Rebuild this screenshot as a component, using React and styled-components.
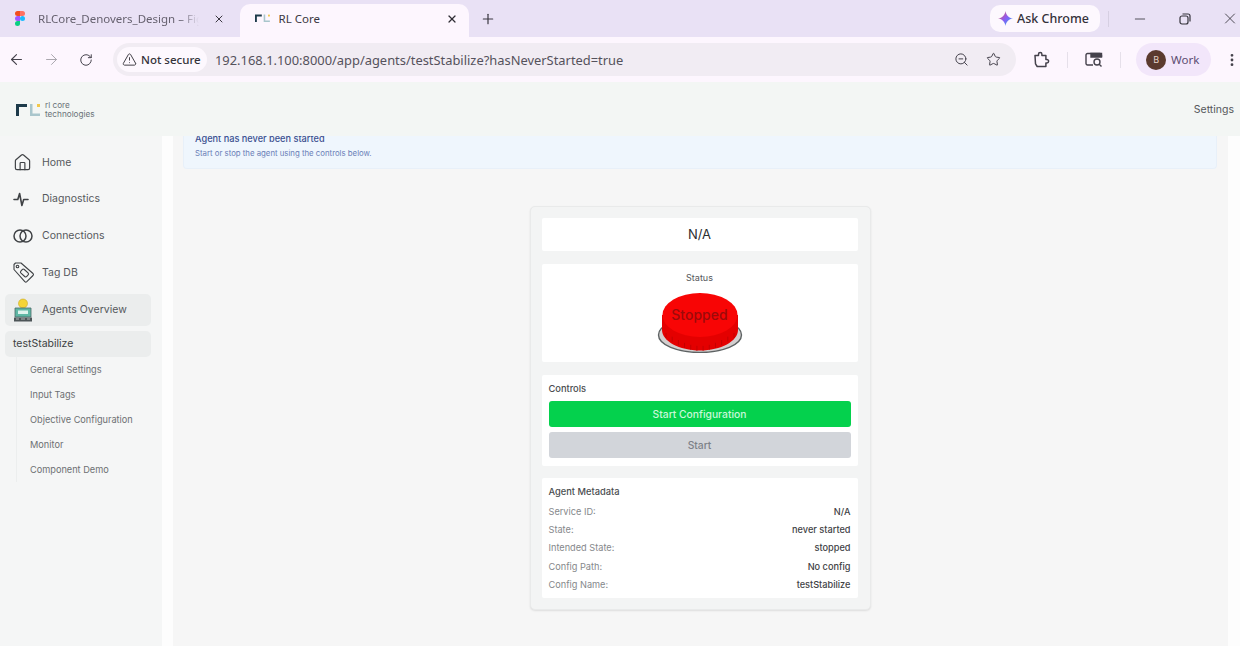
import styled, { createGlobalStyle } from "styled-components";
import {
  ArrowLeft,
  ArrowRight,
  RotateCw,
  TriangleAlert,
  ZoomOut,
  Star,
  Minus,
  X,
  Plus,
  EllipsisVertical,
  Home,
} from "lucide-react";

const GlobalStyle = createGlobalStyle`
  html, body {
    margin: 0;
    padding: 0;
    height: 100%;
    overflow: hidden;
    background: #f6f6f6;
    font-family: Inter, "Liberation Sans", sans-serif;
  }
  * { box-sizing: border-box; }
`;

const Page = styled.div`
  width: 1240px;
  height: 646px;
  display: flex;
  flex-direction: column;
  overflow: hidden;
`;

const TabStrip = styled.div`
  height: 37px;
  flex: none;
  background: #e9e1f5;
  display: flex;
  align-items: flex-end;
  font-family: "Noto Sans", sans-serif;
`;

const Tab = styled.div`
  width: ${(p) => p.$width}px;
  height: 33px;
  display: flex;
  align-items: center;
  padding: 0 ${(p) => p.$padRight}px 4px 15px;
  border-radius: 10px 10px 0 0;
  background: ${(p) => (p.$active ? "#fdf6fe" : "transparent")};
  font-size: 11.5px;
  color: ${(p) => (p.$active ? "#3b3842" : "#66616f")};
  flex: none;
`;

const TabTitle = styled.span`
  margin-left: ${(p) => p.$gap}px;
  flex: 1;
  white-space: nowrap;
  overflow: hidden;
  mask-image: ${(p) => (p.$fade ? "linear-gradient(90deg, #000 88%, transparent)" : "none")};
`;

const NewTab = styled.div`
  width: 18px;
  margin: 0 0 10px 11px;
  display: flex;
  color: #3a3740;
`;

const TabActions = styled.div`
  margin-left: auto;
  height: 37px;
  display: flex;
  align-items: center;
  color: #2f2d35;
  padding-right: 1px;
`;

const AskChrome = styled.div`
  width: 110px;
  height: 27px;
  background: #fdf8fe;
  border-radius: 10px;
  display: flex;
  align-items: center;
  gap: 4px;
  padding-left: 8px;
  font-size: 12.5px;
  font-weight: 500;
  color: #33313a;
  white-space: nowrap;
`;

const WindowDivider = styled.div`
  width: 1px;
  height: 16px;
  background: #d6cfe2;
  margin: 0 22px 0 8px;
`;

const WindowButton = styled.div`
  width: 18px;
  display: flex;
  justify-content: center;
  margin-right: ${(p) => p.$gap}px;
`;

const Toolbar = styled.div`
  height: 45px;
  flex: none;
  background: #fdf6fe;
  display: flex;
  align-items: center;
  padding-left: 8px;
  color: #45424c;
  font-family: "Noto Sans", sans-serif;
`;

const NavButton = styled.div`
  width: 17px;
  display: flex;
  justify-content: center;
  margin-right: ${(p) => p.$gap}px;
  color: ${(p) => p.$color || "#45424c"};
`;

const Omnibox = styled.div`
  width: 904px;
  height: 33px;
  margin-left: 18px;
  background: #f1ecf3;
  border-radius: 17px;
  display: flex;
  align-items: center;
  padding: 0 15px 0 4px;
`;

const SecurityChip = styled.div`
  width: 90px;
  height: 25px;
  background: #fdf8fe;
  border-radius: 13px;
  display: flex;
  align-items: center;
  gap: 4px;
  padding-left: 5px;
  font-size: 11.5px;
  font-weight: 500;
  color: #35333b;
  white-space: nowrap;
`;

const Url = styled.span`
  margin-left: 8px;
  flex: 1;
  font-size: 12.9px;
  color: #55525c;
  white-space: nowrap;
`;

const OmniIcon = styled.div`
  display: flex;
  margin-left: ${(p) => p.$gap}px;
`;

const ToolbarDivider = styled.div`
  width: 1px;
  height: 16px;
  background: #e6e0ea;
  margin-left: ${(p) => p.$gap}px;
`;

const ProfileChip = styled.div`
  width: 75px;
  height: 33px;
  margin-left: 15px;
  border-radius: 17px;
  background: #f2e6fa;
  display: flex;
  align-items: center;
  gap: 5px;
  padding-left: 10px;
  font-size: 11.5px;
  color: #5c4c72;
`;

const Avatar = styled.div`
  width: 20px;
  height: 20px;
  border-radius: 50%;
  background: #5b3a2e;
  color: #e8d8cc;
  font-size: 9px;
  display: flex;
  align-items: center;
  justify-content: center;
`;

const AppHeader = styled.header`
  height: 54px;
  flex: none;
  background: #f3f6f4;
  display: flex;
  align-items: center;
  justify-content: space-between;
  padding: 1px 6px 0 16px;
  font-size: 10.5px;
  color: #55585b;
`;

const LogoRow = styled.div`
  display: flex;
  align-items: center;
  gap: 4px;
`;

const LogoText = styled.div`
  font-size: 8.2px;
  line-height: 8.5px;
  color: #6a7378;
`;

const Body = styled.div`
  flex: 1;
  display: flex;
  min-height: 0;
`;

const Sidebar = styled.nav`
  width: 162px;
  flex: none;
  background: #f5f6f6;
  padding: 10px 11px 0 5px;
`;

const Gutter = styled.div`
  width: 11px;
  flex: none;
  background: #fdfdfd;
`;

const NavItem = styled.div`
  height: 32px;
  margin-bottom: 4.9px;
  display: flex;
  align-items: center;
  border-radius: 5px;
  background: ${(p) => (p.$active ? "#ebeded" : "transparent")};
  font-size: 10.5px;
  color: #55585c;
`;

const NavIcon = styled.div`
  width: 37px;
  padding-left: 8px;
  flex: none;
  display: flex;
  color: #3f4245;
`;

const AgentName = styled.div`
  height: 26px;
  margin-top: 5px;
  border-radius: 5px;
  background: #ebeded;
  display: flex;
  align-items: center;
  padding-left: 8px;
  font-size: 10.5px;
  color: #3c3f42;
`;

const SubMenu = styled.div`
  margin: -1px 0 0 11px;
  border-left: 1px solid #eceeee;
  padding-left: 13px;
  padding-top: 1px;
`;

const SubItem = styled.div`
  height: 25px;
  display: flex;
  align-items: center;
  font-size: 9.2px;
  color: #6d7073;
  white-space: nowrap;
`;

const Main = styled.main`
  flex: 1;
  background: #f6f6f6;
  padding: 0 11px 0 10px;
  display: flex;
  flex-direction: column;
  align-items: center;
  min-width: 0;
`;

const Notice = styled.div`
  width: 100%;
  height: 33px;
  flex: none;
  background: #eff6fd;
  border: 1px solid #e8f0f9;
  border-top: none;
  border-radius: 0 0 4px 4px;
  padding-left: 11px;
  overflow: hidden;
`;

const NoticeTitle = styled.div`
  font-size: 9.2px;
  font-weight: 500;
  line-height: 12px;
  margin-top: -3px;
  color: #3c4f8e;
`;

const NoticeText = styled.div`
  font-size: 7.8px;
  line-height: 10px;
  margin-top: 3px;
  color: #6b7fb8;
`;

const Card = styled.section`
  width: 341px;
  height: 404px;
  margin-top: 37px;
  background: #f3f4f4;
  border: 1px solid #e9eaea;
  border-radius: 5px;
  box-shadow: 0 1px 2px rgba(0, 0, 0, 0.1);
  padding: 11px 12px 0 11px;
  display: flex;
  flex-direction: column;
  gap: 13px;
`;

const Panel = styled.div`
  background: #fff;
  border-radius: 2px;
  height: ${(p) => p.$height}px;
  flex: none;
`;

const TitlePanel = styled(Panel)`
  display: flex;
  align-items: center;
  justify-content: center;
  padding-bottom: 1px;
  font-size: 13px;
  color: #2b2d30;
`;

const StatusPanel = styled(Panel)`
  display: flex;
  flex-direction: column;
  align-items: center;
  padding-top: 8px;
`;

const StatusLabel = styled.div`
  font-size: 9px;
  line-height: 12px;
  color: #55585b;
`;

const ButtonWrap = styled.div`
  position: relative;
  width: 88px;
  height: 60px;
  margin-top: 9px;
`;

const StoppedText = styled.span`
  position: absolute;
  top: 13px;
  left: 0;
  right: 0;
  text-align: center;
  font-size: 14px;
  font-weight: 500;
  line-height: 17px;
  color: #9c0a0a;
`;

const ControlsPanel = styled(Panel)`
  padding: 8px 7px 0;
`;

const PanelHeading = styled.div`
  font-size: 9.3px;
  font-weight: 500;
  line-height: 12px;
  color: #4a4d50;
`;

const ActionButton = styled.div`
  height: 26px;
  margin-top: ${(p) => p.$top}px;
  border-radius: 3px;
  background: ${(p) => (p.$primary ? "#04d14d" : "#d2d5da")};
  color: ${(p) => (p.$primary ? "#c8f8da" : "#7d8188")};
  display: flex;
  align-items: center;
  justify-content: center;
  font-size: 10.3px;
  font-weight: 500;
`;

const MetaPanel = styled(Panel)`
  margin-top: -1px;
  padding: 8px 7px 0;
`;

const MetaRows = styled.div`
  padding-top: 4px;
`;

const MetaRow = styled.div`
  height: 18.3px;
  display: flex;
  align-items: center;
  justify-content: space-between;
  font-size: 9.2px;
  color: #85888b;
`;

const MetaValue = styled.span`
  font-weight: 500;
  color: #3f4245;
`;

const PageEdge = styled.div`
  width: 12px;
  flex: none;
  background: #fdfdfd;
`;

function FigmaIcon() {
  return (
    <svg width="10" height="15" viewBox="0 0 10 15">
      <path d="M5 0H2.500a2.500 2.500 0 0 0 0 5H5z" fill="#f24e1e" />
      <path d="M5 0h2.500a2.500 2.500 0 0 1 0 5H5z" fill="#ff7262" />
      <path d="M5 5H2.500a2.500 2.500 0 0 0 0 5H5z" fill="#a259ff" />
      <circle cx="7.500" cy="7.500" r="2.500" fill="#1abcfe" />
      <path d="M2.500 10H5v2.500A2.500 2.500 0 1 1 2.500 10z" fill="#0acf83" />
    </svg>
  );
}

function RlMark({ scale = 1 }) {
  return (
    <svg width={25 * scale} height={14 * scale} viewBox="0 0 25 14">
      <path d="M0 1h11v3H3v9H0z" fill="#1d3a4a" />
      <path d="M14 1h2.500v9.500H24V13H14z" fill="#a9c6cc" />
      <rect x="21" y="1" width="3" height="3" fill="#f2c84b" />
    </svg>
  );
}

function GeminiIcon() {
  return (
    <svg width="15" height="15" viewBox="0 0 16 16">
      <defs>
        <linearGradient id="gem" x1="0" y1="0" x2="1" y2="1">
          <stop offset="0" stopColor="#f0524f" />
          <stop offset="0.5" stopColor="#8a5cf6" />
          <stop offset="1" stopColor="#1fb6e8" />
        </linearGradient>
      </defs>
      <path d="M8 0c.6 4.400 3.400 7.400 8 8-4.600.6-7.400 3.600-8 8-.6-4.400-3.400-7.400-8-8 4.600-.6 7.400-3.600 8-8z" fill="url(#gem)" />
    </svg>
  );
}

function RestoreIcon() {
  return (
    <svg width="12" height="12" viewBox="0 0 12 12" fill="none" stroke="#35333b" strokeWidth="1.200">
      <rect x="1" y="3" width="8" height="8" rx="2" />
      <path d="M3.500 1h5.500a2 2 0 0 1 2 2v5.500" />
    </svg>
  );
}

function ExtensionIcon() {
  return (
    <svg width="17" height="17" viewBox="0 0 17 17" fill="none" stroke="#45424c" strokeWidth="1.500" strokeLinejoin="round">
      <path d="M2 4.500h3.500V3.200a1.700 1.700 0 0 1 3.400 0v1.300h4v4h1a1.700 1.700 0 0 1 0 3.400h-1v3.600H4.200L2.500 12.800z" />
    </svg>
  );
}

function SearchPanelIcon() {
  return (
    <svg width="18" height="16" viewBox="0 0 18 16" fill="none" stroke="#45424c" strokeWidth="1.400">
      <path d="M8 13H2.500A1.500 1.500 0 0 1 1 11.500V3a1.500 1.500 0 0 1 1.500-1.500H15A1.500 1.500 0 0 1 16.500 3v2" />
      <path d="M6 1.500h10.500V5H6z" fill="#45424c" />
      <circle cx="12" cy="10" r="3" />
      <path d="M14.200 12.200L16.500 14.500" />
    </svg>
  );
}

function PulseIcon() {
  return (
    <svg width="16" height="16" viewBox="0 0 16 16" fill="none" stroke="#3f4245" strokeWidth="1.600" strokeLinejoin="round" strokeLinecap="round">
      <path d="M1 8.500h3.800L6.600 2.500l2.300 12 1.800-6H15" />
    </svg>
  );
}

function ConnectionsIcon() {
  return (
    <svg width="20" height="14" viewBox="0 0 20 14" fill="none" stroke="#3f4245" strokeWidth="1.500">
      <circle cx="7" cy="7" r="6" />
      <circle cx="13" cy="7" r="6" />
    </svg>
  );
}

function TagIcon() {
  return (
    <svg width="21" height="21" viewBox="0 0 21 21" fill="none" stroke="#3f4245" strokeWidth="1.100" strokeLinejoin="round">
      <path d="M1 2.500L2.500 1h5.500l12 10.500a1.500 1.500 0 0 1 0 2l-6.200 6.200a1.500 1.500 0 0 1-2 0L1 7.500z" />
      <circle cx="4.500" cy="4.500" r="1.300" />
      <rect x="7.500" y="8.500" width="8" height="5" rx="1.500" transform="rotate(42 11.500 11)" />
    </svg>
  );
}

function AgentsIcon() {
  return (
    <svg width="20" height="24" viewBox="0 0 20 24">
      <circle cx="10" cy="5.500" r="4.500" fill="#f4d437" stroke="#c9a920" strokeWidth="0.6" />
      <path d="M2 10h16v9H2z" fill="#5fb7a5" stroke="#4a6a68" strokeWidth="0.8" />
      <path d="M5 12.500h10v3.500H5z" fill="#dff3ee" />
      <path d="M1 19.500h18v4H1z" fill="#4d5558" />
      <path d="M3 21h3M8 21h4M14 21h3" stroke="#c9d0d2" strokeWidth="0.8" />
    </svg>
  );
}

function StoppedButton() {
  const ridges = [];
  for (let i = 0; i < 12; i++) {
    const t = i / 11;
    const x = 10 + t * 68;
    const y = 40 + Math.sin(t * Math.PI) * 13;
    ridges.push(<path key={i} d={`M${x} ${y}v5`} stroke="#bd0000" strokeWidth="0.8" />);
  }
  return (
    <svg width="88" height="60" viewBox="0 0 88 60">
      <ellipse cx="44" cy="42" rx="41.500" ry="17.500" fill="#d3cfcf" stroke="#5d6263" strokeWidth="1.400" />
      <path d="M6 22v15c0 11 17 20.500 38 20.500s38-9.500 38-20.500V22z" fill="#e40000" />
      {ridges}
      <ellipse cx="44" cy="22" rx="37.500" ry="22" fill="#f80505" />
    </svg>
  );
}

const navItems = [
  { label: "Home", icon: <Home size={19} strokeWidth={1.5} /> },
  { label: "Diagnostics", icon: <PulseIcon /> },
  { label: "Connections", icon: <ConnectionsIcon /> },
  { label: "Tag DB", icon: <TagIcon /> },
  { label: "Agents Overview", icon: <AgentsIcon />, active: true },
];

const subItems = ["General Settings", "Input Tags", "Objective Configuration", "Monitor", "Component Demo"];

const metadata = [
  ["Service ID:", "N/A"],
  ["State:", "never started"],
  ["Intended State:", "stopped"],
  ["Config Path:", "No config"],
  ["Config Name:", "testStabilize"],
];

export default function App() {
  return (
    <Page>
      <GlobalStyle />
      <TabStrip>
        <Tab $width={240} $padRight={15}>
          <FigmaIcon />
          <TabTitle $gap={13} $fade>RLCore_Denovers_Design – Figma</TabTitle>
          <X size={12} strokeWidth={2} color="#3a3740" style={{ marginLeft: 14 }} />
        </Tab>
        <Tab $width={229} $padRight={11} $active>
          <RlMark scale={0.62} />
          <TabTitle $gap={8}>RL Core</TabTitle>
          <X size={12} strokeWidth={2.4} color="#2f2d35" />
        </Tab>
        <NewTab>
          <Plus size={16} strokeWidth={1.8} />
        </NewTab>
        <TabActions>
          <AskChrome>
            <GeminiIcon />
            Ask Chrome
          </AskChrome>
          <WindowDivider />
          <WindowButton $gap={27}>
            <Minus size={16} strokeWidth={1.2} />
          </WindowButton>
          <WindowButton $gap={27}>
            <RestoreIcon />
          </WindowButton>
          <WindowButton $gap={0}>
            <X size={19} strokeWidth={1.1} />
          </WindowButton>
        </TabActions>
      </TabStrip>

      <Toolbar>
        <NavButton $gap={18}>
          <ArrowLeft size={17} strokeWidth={1.6} />
        </NavButton>
        <NavButton $gap={18} $color="#a9a6ad">
          <ArrowRight size={17} strokeWidth={1.4} />
        </NavButton>
        <NavButton $gap={0}>
          <RotateCw size={14} strokeWidth={1.7} />
        </NavButton>
        <Omnibox>
          <SecurityChip>
            <TriangleAlert size={15} strokeWidth={1.5} />
            Not secure
          </SecurityChip>
          <Url>192.168.1.100:8000/app/agents/testStabilize?hasNeverStarted=true</Url>
          <OmniIcon $gap={0}>
            <ZoomOut size={15} strokeWidth={1.6} />
          </OmniIcon>
          <OmniIcon $gap={17}>
            <Star size={15} strokeWidth={1.6} />
          </OmniIcon>
        </Omnibox>
        <OmniIcon $gap={17}>
          <ExtensionIcon />
        </OmniIcon>
        <ToolbarDivider $gap={17} />
        <OmniIcon $gap={17}>
          <SearchPanelIcon />
        </OmniIcon>
        <ToolbarDivider $gap={17} />
        <ProfileChip>
          <Avatar>B</Avatar>
          Work
        </ProfileChip>
        <OmniIcon $gap={13}>
          <EllipsisVertical size={16} strokeWidth={2.2} />
        </OmniIcon>
      </Toolbar>

      <AppHeader>
        <LogoRow>
          <RlMark />
          <LogoText>
            rl core
            <br />
            technologies
          </LogoText>
        </LogoRow>
        Settings
      </AppHeader>

      <Body>
        <Sidebar>
          {navItems.map((item) => (
            <NavItem key={item.label} $active={item.active}>
              <NavIcon>{item.icon}</NavIcon>
              {item.label}
            </NavItem>
          ))}
          <AgentName>testStabilize</AgentName>
          <SubMenu>
            {subItems.map((label) => (
              <SubItem key={label}>{label}</SubItem>
            ))}
          </SubMenu>
        </Sidebar>
        <Gutter />
        <Main>
          <Notice>
            <NoticeTitle>Agent has never been started</NoticeTitle>
            <NoticeText>Start or stop the agent using the controls below.</NoticeText>
          </Notice>
          <Card>
            <TitlePanel $height={33}>N/A</TitlePanel>
            <StatusPanel $height={98}>
              <StatusLabel>Status</StatusLabel>
              <ButtonWrap>
                <StoppedButton />
                <StoppedText>Stopped</StoppedText>
              </ButtonWrap>
            </StatusPanel>
            <ControlsPanel $height={91}>
              <PanelHeading>Controls</PanelHeading>
              <ActionButton $primary $top={6}>
                Start Configuration
              </ActionButton>
              <ActionButton $top={5}>Start</ActionButton>
            </ControlsPanel>
            <MetaPanel $height={120}>
              <PanelHeading>Agent Metadata</PanelHeading>
              <MetaRows>
                {metadata.map(([label, value]) => (
                  <MetaRow key={label}>
                    {label}
                    <MetaValue>{value}</MetaValue>
                  </MetaRow>
                ))}
              </MetaRows>
            </MetaPanel>
          </Card>
        </Main>
        <PageEdge />
      </Body>
    </Page>
  );
}
